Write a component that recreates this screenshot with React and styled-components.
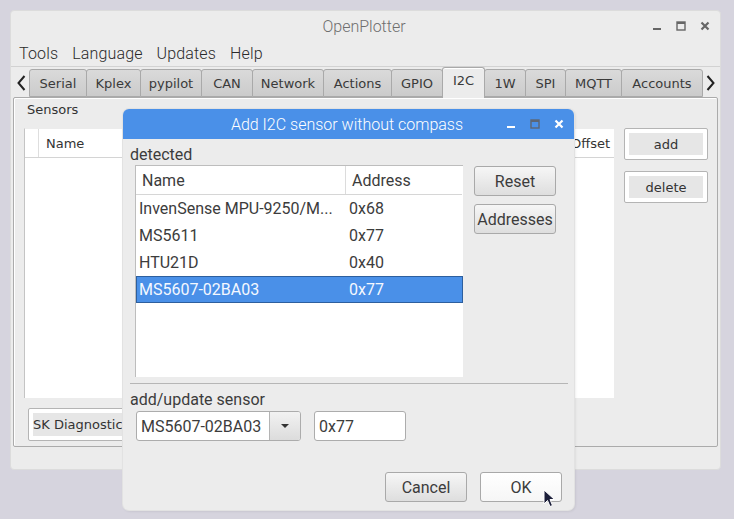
import styled, { createGlobalStyle } from "styled-components";

const GlobalStyle = createGlobalStyle`
  html, body {
    margin: 0;
    padding: 0;
    background: #d6d4de;
    overflow: hidden;
  }
  * { box-sizing: border-box; }
`;

const Desktop = styled.div`
  position: relative;
  width: 734px;
  height: 519px;
  background: #d6d4de;
  font-family: Roboto, "Liberation Sans", sans-serif;
`;

/* ---------- main window ---------- */

const Window = styled.div`
  position: absolute;
  left: 10px;
  top: 10px;
  width: 711px;
  height: 460px;
  background: #ececec;
  border: 1px solid #dcdcdc;
  border-radius: 4px;
  display: flex;
  flex-direction: column;
`;

const TitleBar = styled.div`
  height: 30px;
  display: grid;
  grid-template-columns: 1fr auto 1fr;
  align-items: center;
  padding-right: 3px;
  background: ${({ $active }) => ($active ? "#4a90e8" : "transparent")};
  border-radius: ${({ $active }) => ($active ? "6px 6px 0 0" : "4px 4px 0 0")};
`;

const Title = styled.div`
  grid-column: 2;
  font-size: 16px;
  font-weight: 300;
  color: ${({ $active }) => ($active ? "#ffffff" : "#6e6e6e")};
  white-space: nowrap;
`;

const Controls = styled.div`
  grid-column: 3;
  justify-self: end;
  display: flex;
`;

const Ctl = styled.div`
  width: 24px;
  height: 24px;
  display: flex;
  align-items: center;
  justify-content: center;
`;

function WinControls({ color = "#666", maxColor }) {
  return (
    <Controls>
      <Ctl>
        <svg width="10" height="10" viewBox="0 0 10 10">
          <rect x="1" y="7" width="8" height="2" fill={color} />
        </svg>
      </Ctl>
      <Ctl>
        <svg width="10" height="10" viewBox="0 0 10 10">
          <rect x="1" y="1" width="8" height="8" fill="none" stroke={maxColor || color} strokeWidth="1.4" />
          <rect x="1" y="1" width="8" height="2" fill={maxColor || color} />
        </svg>
      </Ctl>
      <Ctl>
        <svg width="10" height="10" viewBox="0 0 10 10">
          <path d="M1.5 1.5 L8.5 8.5 M8.5 1.5 L1.5 8.5" stroke={color} strokeWidth="2.2" />
        </svg>
      </Ctl>
    </Controls>
  );
}

const MenuBar = styled.div`
  height: 26px;
  display: flex;
  align-items: center;
  gap: 14px;
  padding-left: 8px;
  border-bottom: 1px solid #d2d2d2;
  font-size: 16px;
  font-weight: 300;
  color: #2a2a2a;
  & > span { letter-spacing: 0.15px; }
`;

const TabRow = styled.div`
  height: 30px;
  display: flex;
  align-items: flex-end;
  padding-left: 3px;
  position: relative;
  z-index: 1;
`;

const Arrow = styled.div`
  width: 15px;
  height: 28px;
  display: flex;
  align-items: center;
  justify-content: center;
`;

const Tab = styled.div`
  width: ${({ $w }) => $w}px;
  height: ${({ $sel }) => ($sel ? 31 : 28)}px;
  margin-bottom: ${({ $sel }) => ($sel ? -1 : 0)}px;
  display: flex;
  align-items: center;
  justify-content: center;
  padding-top: ${({ $sel }) => ($sel ? 0 : 1)}px;
  padding-bottom: ${({ $sel }) => ($sel ? 5 : 0)}px;
  font-family: "DejaVu Sans", sans-serif;
  font-size: 13px;
  color: #3a3a3a;
  border: 1px solid #a9a9a9;
  border-bottom: ${({ $sel }) => ($sel ? "none" : "1px solid #a9a9a9")};
  border-radius: 3px 3px 0 0;
  background: ${({ $sel }) =>
    $sel ? "#ececec" : "linear-gradient(#dadada, #cbcbcb)"};
  box-shadow: ${({ $sel }) => ($sel ? "inset 0 1px 0 #ffffff" : "none")};
  & + & {
    margin-left: -1px;
  }
`;

const Page = styled.div`
  margin: 0 2px;
  height: 350px;
  border: 1px solid #ababab;
  border-radius: 2px;
  box-shadow: inset 1px 1px 0 #ffffff;
  padding: 2px 9px 0 10px;
  display: flex;
  flex-direction: column;
`;

const SmallLabel = styled.div`
  font-family: "DejaVu Sans", sans-serif;
  font-size: 13px;
  line-height: 20px;
  color: #333;
  padding-left: 3px;
`;

const PageRow = styled.div`
  display: flex;
  gap: 10px;
  margin-top: 8px;
`;

const SensorList = styled.div`
  width: 590px;
  height: 270px;
  background: #fff;
  border-left: 1px solid #c4c4c4;
  border-top: 1px solid #ececec;
`;

const SensorHead = styled.div`
  height: 29px;
  display: flex;
  border-bottom: 1px solid #d4d4d4;
  font-family: "DejaVu Sans", sans-serif;
  font-size: 13px;
  color: #333;
`;

const HeadCell = styled.div`
  width: ${({ $w }) => ($w ? `${$w}px` : "auto")};
  flex: ${({ $w }) => ($w ? "none" : 1)};
  display: flex;
  align-items: center;
  padding-left: ${({ $pad }) => $pad ?? 6}px;
  border-right: ${({ $line }) => ($line ? "1px solid #dedede" : "none")};
`;

const SideCol = styled.div`
  display: flex;
  flex-direction: column;
  gap: 11px;
`;

const FlatButton = styled.div`
  width: ${({ $w }) => $w || 84}px;
  height: ${({ $h }) => $h || 32}px;
  background: #fff;
  border: 1px solid #b4b4b4;
  border-radius: 2px;
  padding: 4px;
  display: flex;
`;

const FlatInner = styled.div`
  flex: 1;
  background: #e6e6e6;
  display: flex;
  align-items: center;
  justify-content: ${({ $left }) => ($left ? "flex-start" : "center")};
  font-family: "DejaVu Sans", sans-serif;
  font-size: 13px;
  color: #333;
  white-space: nowrap;
  overflow: hidden;
`;

const BottomRow = styled.div`
  margin-top: 10px;
  padding-left: 4px;
`;

/* ---------- dialog ---------- */

const Dialog = styled.div`
  position: absolute;
  left: 123px;
  top: 109px;
  width: 451px;
  height: 401px;
  background: #ececec;
  border-radius: 6px;
  box-shadow: 0 0 0 1px #e2e2e2, 1px 1px 3px rgba(0, 0, 0, 0.12);
  display: flex;
  flex-direction: column;
`;

const DBody = styled.div`
  padding: 6px 12px 8px 7px;
  display: flex;
  flex-direction: column;
  flex: 1;
  font-size: 16px;
  color: #3c3c3c;
`;

const Label = styled.div`
  font-size: 16px;
  line-height: 20px;
  color: #3c3c3c;
`;

const TopSection = styled.div`
  display: flex;
  gap: 11px;
  padding-left: 5px;
`;

const ListBox = styled.div`
  width: 328px;
  height: 212px;
  background: #fff;
  border: 1px solid #bdbdbd;
  border-right: none;
  border-bottom: none;
`;

const ListHead = styled.div`
  height: 29px;
  display: flex;
  border-bottom: 1px solid #d6d6d6;
  margin-right: 1px;
`;

const Row = styled.div`
  height: 27px;
  display: flex;
  align-items: center;
  background: ${({ $sel }) => ($sel ? "#4a90e8" : "transparent")};
  box-shadow: ${({ $sel }) => ($sel ? "inset 0 0 0 1px #2d5f9e" : "none")};
  color: ${({ $sel }) => ($sel ? "#f4f8ff" : "#3c3c3c")};
`;

const Cell = styled.div`
  width: ${({ $w }) => ($w ? `${$w}px` : "auto")};
  flex: ${({ $w }) => ($w ? "none" : 1)};
  height: 100%;
  display: flex;
  align-items: center;
  padding-left: ${({ $pad }) => $pad}px;
  border-right: ${({ $line }) => ($line ? "1px solid #dcdcdc" : "none")};
  white-space: nowrap;
  overflow: hidden;
`;

const ButtonCol = styled.div`
  display: flex;
  flex-direction: column;
  gap: 8px;
  margin-top: 1px;
`;

const Button = styled.div`
  width: 82px;
  height: 30px;
  display: flex;
  align-items: center;
  justify-content: center;
  border: 1px solid #a9a9a9;
  border-radius: 3px;
  background: ${({ $hover }) =>
    $hover
      ? "linear-gradient(#ffffff, #f6f6f6)"
      : "linear-gradient(#f6f6f6, #dedede)"};
  font-size: 16px;
  color: #3c3c3c;
`;

const Separator = styled.div`
  height: 1px;
  background: #b6b6b6;
  margin-top: 6px;
  margin-right: -6px;
`;

const Label2 = styled(Label)`
  margin-top: 6px;
`;

const FieldRow = styled.div`
  display: flex;
  gap: 13px;
  margin-top: 1px;
  padding-left: 6px;
`;

const Combo = styled.div`
  width: 165px;
  height: 30px;
  display: flex;
  border: 1px solid #acacac;
  border-radius: 3px;
  overflow: hidden;
  background: #fff;
`;

const ComboText = styled.div`
  flex: 1;
  display: flex;
  align-items: center;
  padding-left: 4px;
  font-size: 16px;
  color: #3c3c3c;
`;

const ComboButton = styled.div`
  width: 31px;
  border-left: 1px solid #b4b4b4;
  background: linear-gradient(#f2f2f2, #dcdcdc);
  display: flex;
  align-items: center;
  justify-content: center;
`;

const TextBox = styled.div`
  width: 92px;
  height: 30px;
  border: 1px solid #acacac;
  border-radius: 3px;
  background: #fff;
  display: flex;
  align-items: center;
  padding-left: 4px;
  font-size: 16px;
  color: #3c3c3c;
`;

const DialogButtons = styled.div`
  margin-top: auto;
  display: flex;
  justify-content: flex-end;
  gap: 13px;
`;

const Cursor = styled.svg`
  position: absolute;
  left: 543px;
  top: 489px;
`;

const tabs = [
  ["Serial", 58],
  ["Kplex", 55],
  ["pypilot", 62],
  ["CAN", 52],
  ["Network", 72],
  ["Actions", 69],
  ["GPIO", 52],
  ["I2C", 43],
  ["1W", 42],
  ["SPI", 41],
  ["MQTT", 57],
  ["Accounts", 82],
];

const detected = [
  ["InvenSense MPU-9250/M...", "0x68"],
  ["MS5611", "0x77"],
  ["HTU21D", "0x40"],
  ["MS5607-02BA03", "0x77"],
];

export default function App() {
  return (
    <Desktop>
      <GlobalStyle />
      <Window>
        <TitleBar>
          <Title>OpenPlotter</Title>
          <WinControls color="#666" />
        </TitleBar>
        <MenuBar>
          <span>Tools</span>
          <span>Language</span>
          <span>Updates</span>
          <span>Help</span>
        </MenuBar>
        <TabRow>
          <Arrow>
            <svg width="9" height="16" viewBox="0 0 9 16">
              <path d="M7.5 1 L1.5 8 L7.5 15" fill="none" stroke="#222" strokeWidth="2" />
            </svg>
          </Arrow>
          {tabs.map(([t, w]) => (
            <Tab key={t} $w={w} $sel={t === "I2C"}>
              {t}
            </Tab>
          ))}
          <Arrow>
            <svg width="9" height="16" viewBox="0 0 9 16">
              <path d="M1.5 1 L7.5 8 L1.5 15" fill="none" stroke="#222" strokeWidth="2" />
            </svg>
          </Arrow>
        </TabRow>
        <Page>
          <SmallLabel>Sensors</SmallLabel>
          <PageRow>
            <SensorList>
              <SensorHead>
                <HeadCell $w={14} $line />
                <HeadCell $pad={7}>Name</HeadCell>
                <HeadCell $w={50} $pad={6} style={{ borderLeft: "1px solid #dedede" }}>
                  Offset
                </HeadCell>
              </SensorHead>
            </SensorList>
            <SideCol>
              <FlatButton>
                <FlatInner>add</FlatInner>
              </FlatButton>
              <FlatButton>
                <FlatInner>delete</FlatInner>
              </FlatButton>
            </SideCol>
          </PageRow>
          <BottomRow>
            <FlatButton $w={110} $h={33}>
              <FlatInner $left>SK Diagnostic</FlatInner>
            </FlatButton>
          </BottomRow>
        </Page>
      </Window>

      <Dialog>
        <TitleBar $active>
          <Title $active>Add I2C sensor without compass</Title>
          <WinControls color="#ffffff" maxColor="#5d6675" />
        </TitleBar>
        <DBody>
          <Label>detected</Label>
          <TopSection>
            <ListBox>
              <ListHead>
                <Cell $w={210} $pad={6} $line>Name</Cell>
                <Cell $pad={6}>Address</Cell>
              </ListHead>
              {detected.map(([n, a], i) => (
                <Row key={n} $sel={i === 3}>
                  <Cell $w={210} $pad={3}>{n}</Cell>
                  <Cell $pad={3}>{a}</Cell>
                </Row>
              ))}
            </ListBox>
            <ButtonCol>
              <Button>Reset</Button>
              <Button>Addresses</Button>
            </ButtonCol>
          </TopSection>
          <Separator />
          <Label2>add/update sensor</Label2>
          <FieldRow>
            <Combo>
              <ComboText>MS5607-02BA03</ComboText>
              <ComboButton>
                <svg width="10" height="6" viewBox="0 0 10 6">
                  <path d="M1 1 L9 1 L5 5 Z" fill="#333" />
                </svg>
              </ComboButton>
            </Combo>
            <TextBox>0x77</TextBox>
          </FieldRow>
          <DialogButtons>
            <Button>Cancel</Button>
            <Button $hover>OK</Button>
          </DialogButtons>
        </DBody>
      </Dialog>

      <Cursor width="12" height="19" viewBox="0 0 12 19">
        <path
          d="M1 1 L1 15 L4.5 11.5 L7 17.5 L9.5 16.5 L7 10.5 L11.5 10.5 Z"
          fill="#1c1f3a"
          stroke="#ffffff"
          strokeWidth="1"
          strokeLinejoin="round"
        />
      </Cursor>
    </Desktop>
  );
}
